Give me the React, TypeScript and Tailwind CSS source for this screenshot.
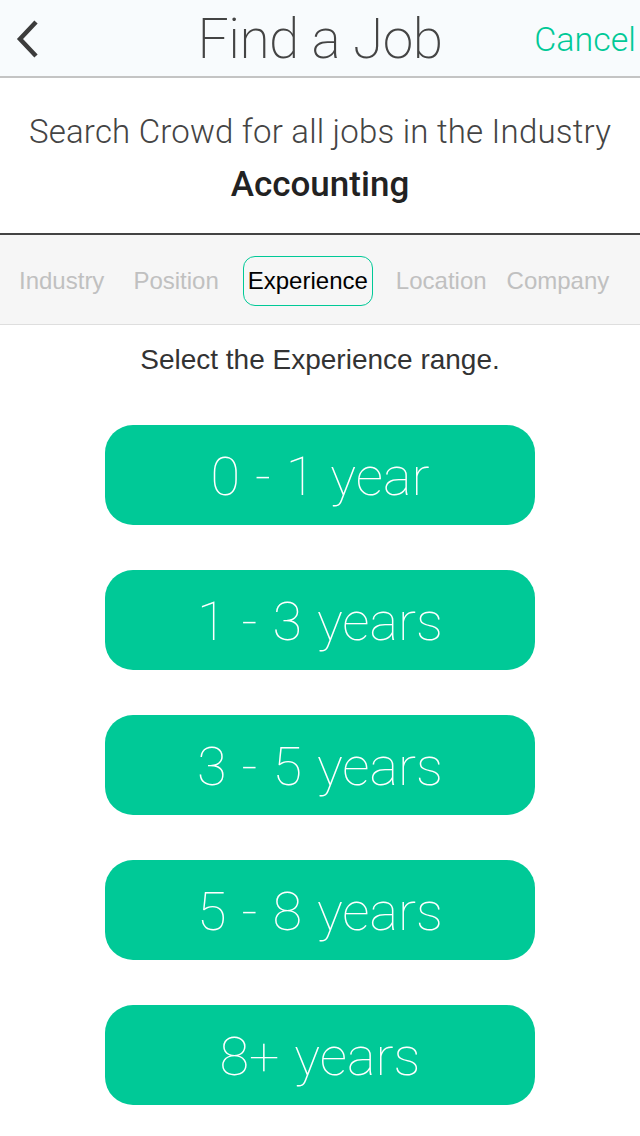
import { useState } from 'react';
import clsx from 'clsx';

const TABS = ['Industry', 'Position', 'Experience', 'Location', 'Company'];
const RANGES = ['0 - 1 year', '1 - 3 years', '3 - 5 years', '5 - 8 years', '8+ years'];

export default function App() {
    const [activeTab, setActiveTab] = useState('Experience');

    return (
        <div className="w-[640px] min-h-[1136px] bg-white font-['Roboto','Liberation_Sans',sans-serif]">
            {/* Nav bar */}
            <div className="relative h-[78px] bg-[#f8fbfd] border-b-2 border-[#c4c4c4] flex items-center justify-center">
                <button className="absolute left-[14px] top-[19px] text-[#3c3c3c]">
                    <svg width="28" height="40" viewBox="0 0 28 40" fill="none">
                        <path d="M22 3 L6 20 L22 37" stroke="currentColor" strokeWidth="4.5" strokeLinecap="butt" />
                    </svg>
                </button>
                <h1 className="text-[55px] font-extralight text-[#444] leading-none tracking-[-0.5px] pt-[2px]">Find a Job</h1>
                <button className="absolute right-[4px] top-[22px] text-[34px] font-light text-[#00c997] leading-none">Cancel</button>
            </div>

            {/* Industry summary */}
            <div className="h-[157px] flex flex-col items-center pt-[34px] border-b-2 border-[#444]">
                <p className="text-[33px] font-light text-[#444] leading-[40px] tracking-[0.2px]">Search Crowd for all jobs in the Industry</p>
                <p className="text-[35px] font-medium text-[#222] leading-[40px] mt-[13px]">Accounting</p>
            </div>

            {/* Tabs */}
            <div className="h-[90px] bg-[#f6f6f6] border-b border-[#dedede] flex items-center pt-[2px] pl-[14px] font-['Liberation_Sans',sans-serif]">
                {TABS.map(tab => (
                    <button
                        key={tab}
                        onClick={() => setActiveTab(tab)}
                        className={clsx(
                            "h-[50px] px-[4px] text-[24px] leading-none rounded-[12px] border",
                            tab === activeTab
                                ? "border-[#00c997] text-black"
                                : "border-transparent text-[#c0c0c0]",
                            tab === 'Industry' && "mr-[19px]",
                            tab === 'Position' && "mr-[19px]",
                            tab === 'Experience' && "mr-[18px]",
                            tab === 'Location' && "mr-[10px]"
                        )}
                    >
                        {tab}
                    </button>
                ))}
            </div>

            {/* Ranges */}
            <div className="flex flex-col items-center">
                <p className="text-[28px] text-[#333] mt-[18px] leading-[34px] font-['Liberation_Sans',sans-serif]">Select the Experience range.</p>
                <div className="flex flex-col gap-[45px] mt-[48px]">
                    {RANGES.map(range => (
                        <button
                            key={range}
                            className="w-[430px] h-[100px] rounded-[28px] bg-[#00c997] text-white text-[54px] font-thin leading-none pt-[4px] [word-spacing:2px]"
                        >
                            {range}
                        </button>
                    ))}
                </div>
            </div>
        </div>
    );
}
